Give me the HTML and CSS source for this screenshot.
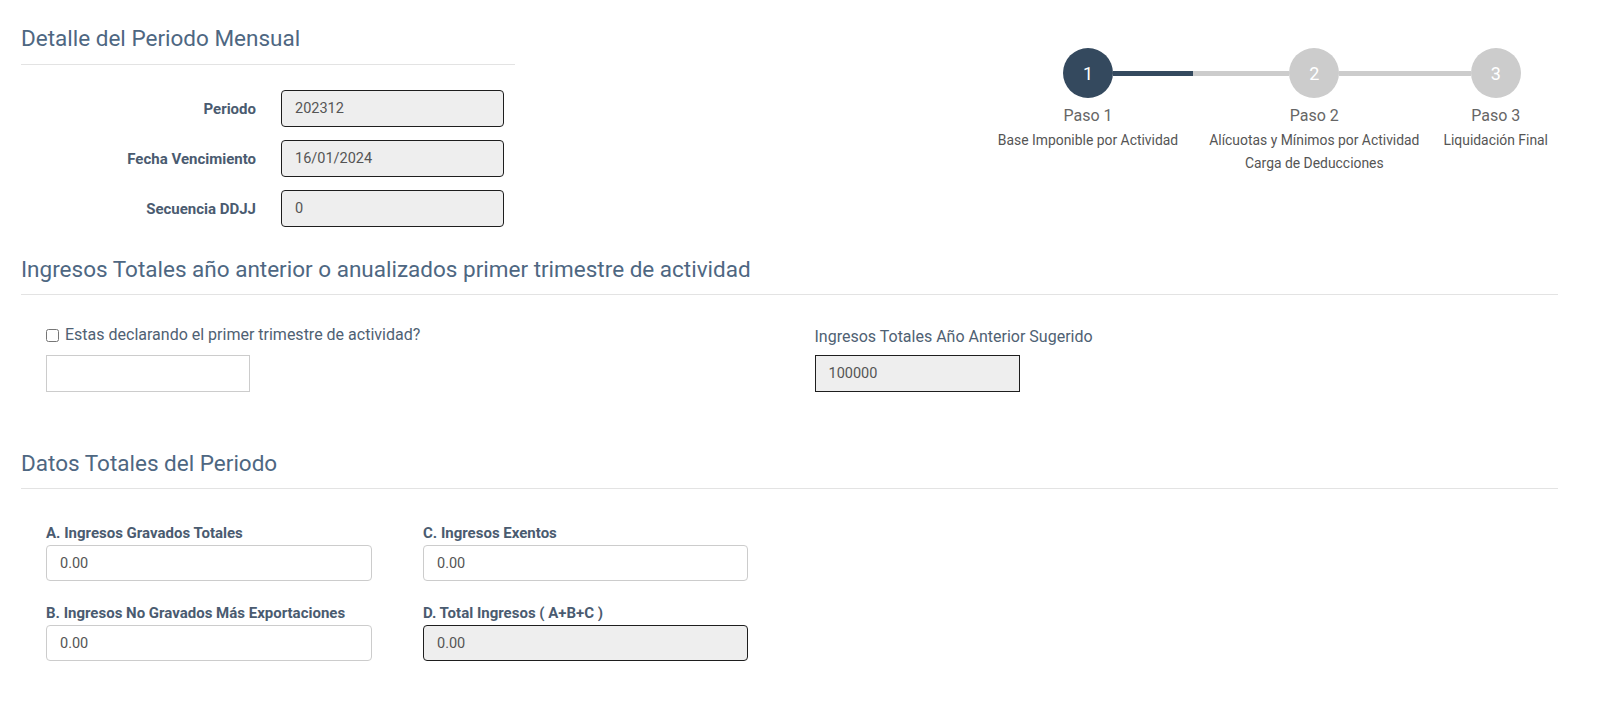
FILE: index.html
```html
<!DOCTYPE html>
<html lang="es">
<head>
<meta charset="utf-8">
<title>Detalle del Periodo Mensual</title>
<link rel="stylesheet" href="styles.css">
</head>
<body>
<main class="page">
  <section class="top">
    <div class="detail">
      <h2 class="sec-title sec-title-first">Detalle del Periodo Mensual</h2>
      <div class="rows">
        <div class="row">
          <label class="row-label">Periodo</label>
          <input class="ctl ctl-ro ctl-round ctl-w223" value="202312" readonly>
        </div>
        <div class="row">
          <label class="row-label">Fecha Vencimiento</label>
          <input class="ctl ctl-ro ctl-round ctl-w223" value="16/01/2024" readonly>
        </div>
        <div class="row">
          <label class="row-label">Secuencia DDJJ</label>
          <input class="ctl ctl-ro ctl-round ctl-w223" value="0" readonly>
        </div>
      </div>
    </div>
    <div class="stepper">
      <div class="step step-1">
        <div class="track"><span class="seg seg-none"></span><span class="circle circle-active">1</span><span class="seg seg-done"></span></div>
        <div class="step-name">Paso 1</div>
        <div class="step-desc">Base Imponible por Actividad</div>
      </div>
      <div class="step step-2">
        <div class="track"><span class="seg"></span><span class="circle">2</span><span class="seg"></span></div>
        <div class="step-name">Paso 2</div>
        <div class="step-desc">Alícuotas y Mínimos por Actividad</div>
        <div class="step-desc">Carga de Deducciones</div>
      </div>
      <div class="step step-3">
        <div class="track"><span class="seg"></span><span class="circle">3</span><span class="seg seg-none"></span></div>
        <div class="step-name">Paso 3</div>
        <div class="step-desc">Liquidación Final</div>
      </div>
    </div>
  </section>

  <section class="block block-ingresos">
    <h2 class="sec-title">Ingresos Totales año anterior o anualizados primer trimestre de actividad</h2>
    <div class="halves">
      <div class="half half-left">
        <label class="plain-label"><input type="checkbox" class="chk"> Estas declarando el primer trimestre de actividad?</label>
        <input class="ctl ctl-w204">
      </div>
      <div class="half half-right">
        <label class="plain-label">Ingresos Totales Año Anterior Sugerido</label>
        <input class="ctl ctl-ro ctl-w205" value="100000" readonly>
      </div>
    </div>
  </section>

  <section class="block block-datos">
    <h2 class="sec-title">Datos Totales del Periodo</h2>
    <div class="totals">
      <div class="field">
        <label class="bold-label">A. Ingresos Gravados Totales</label>
        <input class="ctl ctl-round ctl-full" value="0.00">
      </div>
      <div class="field">
        <label class="bold-label">C. Ingresos Exentos</label>
        <input class="ctl ctl-round ctl-full" value="0.00">
      </div>
      <div class="field">
        <label class="bold-label">B. Ingresos No Gravados Más Exportaciones</label>
        <input class="ctl ctl-round ctl-full" value="0.00">
      </div>
      <div class="field">
        <label class="bold-label">D. Total Ingresos ( A+B+C )</label>
        <input class="ctl ctl-ro ctl-round ctl-full" value="0.00" readonly>
      </div>
    </div>
  </section>
</main>
</body>
</html>
```

FILE: styles.css
```css
* { box-sizing: border-box; }

html, body {
  margin: 0;
  padding: 0;
  background: #ffffff;
}

body {
  font-family: Roboto, "Liberation Sans", Arial, sans-serif;
  color: #555;
  font-size: 14px;
}

.page {
  padding: 0 49px 0 21px;
}

.sec-title {
  margin: 0;
  font-size: 22.5px;
  font-weight: 400;
  line-height: 26px;
  color: #4e6782;
  padding-bottom: 12px;
  border-bottom: 1px solid #e3e3e3;
}

.sec-title-first { padding-bottom: 13px; }

/* top section */
.top {
  display: flex;
  align-items: flex-start;
}

.detail {
  width: 494px;
  padding-top: 25px;
}

.rows {
  display: flex;
  flex-direction: column;
  gap: 13px;
  padding-top: 25px;
}

.row {
  display: flex;
  align-items: center;
  gap: 25px;
}

.row-label {
  width: 235px;
  text-align: right;
  font-weight: 700;
  font-size: 15px;
  color: #4a5b70;
}

.ctl {
  display: block;
  height: 37px;
  padding: 0 13px;
  font-family: Roboto, "Liberation Sans", Arial, sans-serif;
  font-size: 14.5px;
  color: #555;
  background: #fff;
  border: 1px solid #cccccc;
  border-radius: 0;
  outline: none;
  margin: 0;
}

.ctl-ro {
  background: #eeeeee;
  border-color: #1e1e1e;
}

.ctl-round { border-radius: 4px; }

.ctl-w223 { width: 223px; }
.ctl-w204 { width: 204px; }
.ctl-w205 { width: 205px; }
.ctl-full { width: 100%; height: 36px; }

/* stepper */
.stepper {
  margin-left: auto;
  margin-right: 2px;
  margin-top: 48px;
  display: flex;
  align-items: flex-start;
}

.step {
  display: flex;
  flex-direction: column;
  align-items: center;
  --pad: 15px;
}

.step-2 { --pad: 16px; }
.step-3 { --pad: 8px; }

.track {
  align-self: stretch;
  display: flex;
  align-items: center;
  height: 50px;
}

.seg {
  flex: 1;
  height: 5px;
  background: #cccccc;
}

.seg-none { background: transparent; }
.seg-done { background: #34495e; }

.circle {
  flex: none;
  width: 50px;
  height: 50px;
  border-radius: 50%;
  background: #cccccc;
  color: #fff;
  font-size: 18px;
  display: flex;
  align-items: center;
  justify-content: center;
}

.circle-active { background: #34495e; }

.step-name {
  padding: 0 var(--pad);
  margin-top: 7px;
  font-size: 16px;
  line-height: 22px;
  color: #666;
}

.step-desc {
  padding: 0 var(--pad);
  font-size: 13.9px;
  line-height: 23px;
  color: #555;
  white-space: nowrap;
}

.step-name + .step-desc { margin-top: 2px; }

/* sections */
.block-ingresos { padding-top: 29px; }

.halves {
  display: grid;
  grid-template-columns: 1fr 1fr;
  padding-top: 30px;
}

.half {
  padding-left: 25px;
  display: flex;
  flex-direction: column;
}

.half-left { gap: 10px; }
.half-right { gap: 8px; }
.half-right .plain-label { margin-top: 2px; }

.plain-label {
  display: flex;
  align-items: center;
  gap: 6px;
  font-size: 16px;
  line-height: 20px;
  color: #4f6173;
}

.chk {
  margin: 0;
  width: 13px;
  height: 13px;
}

.block-datos { padding-top: 58px; }

.totals {
  display: grid;
  grid-template-columns: 326px 325px;
  column-gap: 51px;
  row-gap: 22px;
  padding: 34px 0 0 25px;
}

.field {
  display: flex;
  flex-direction: column;
  gap: 2px;
}

.bold-label {
  font-weight: 700;
  font-size: 15px;
  line-height: 20px;
  color: #4a5b70;
}
```
